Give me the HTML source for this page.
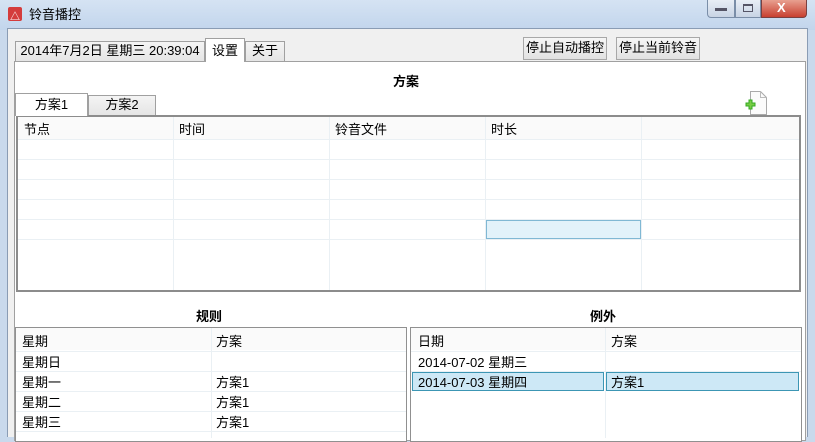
<!DOCTYPE html>
<html><head><meta charset="utf-8"><style>
*{margin:0;padding:0;box-sizing:border-box}
body{width:815px;height:437px;overflow:hidden;position:relative;background:#c9d9ec;font-family:"Liberation Sans","Noto Sans CJK SC",sans-serif;font-size:12px;color:#000}
.a{position:absolute}
.t{position:absolute;white-space:nowrap}
.tab{position:absolute;border:1px solid #a0a0a0;border-bottom:none;background:linear-gradient(#f4f4f4,#e4e4e4);text-align:center;line-height:18px}
.sel{background:#fff}
.btn{position:absolute;border:1px solid #a8a8a8;background:linear-gradient(#f6f6f6,#e2e2e2);text-align:center;line-height:19px;font-size:13px}
.hl{position:absolute;height:1px;background:#eaf0f4}
.vl{position:absolute;width:1px;background:#eaf0f4}
.b{font-weight:bold;font-size:13px}
</style></head><body>
<div class="a" style="left:0;top:0;width:815px;height:30px;background:linear-gradient(#d5e3f3,#c2d5ec)"></div>
<div class="a" style="left:8px;top:7px;width:14px;height:14px;background:#d43c3c;border-radius:2px"></div>
<div class="t" style="left:10px;top:8px;color:#fff;font-size:10px;font-weight:bold">&#9651;</div>
<div class="t" style="left:29px;top:4px;font-size:13px">铃音播控</div>
<div class="a" style="left:707px;top:0;width:28px;height:18px;border:1px solid #7a8ea8;border-top:none;border-radius:0 0 0 4px;background:linear-gradient(#e8eef6,#c8d4e4)"></div>
<div class="a" style="left:715px;top:8px;width:12px;height:3px;background:#556;"></div>
<div class="a" style="left:735px;top:0;width:26px;height:18px;border:1px solid #7a8ea8;border-top:none;background:linear-gradient(#e8eef6,#c8d4e4)"></div>
<div class="a" style="left:743px;top:4px;width:10px;height:8px;border:1px solid #556;border-top-width:2px"></div>
<div class="a" style="left:761px;top:0;width:46px;height:18px;border:1px solid #7a4040;border-top:none;border-radius:0 0 4px 0;background:linear-gradient(#e8a090,#c84030)"></div>
<div class="t" style="left:777px;top:0;color:#fff;font-weight:bold;font-size:13px">X</div>
<div class="a" style="left:7px;top:28px;width:801px;height:409px;background:#f0f0f0;border:1px solid #8a9cb4;border-bottom:none"></div>
<div class="tab" style="left:15px;top:41px;width:190px;height:21px;font-size:13px">2014年7月2日 星期三 20:39:04</div>
<div class="tab sel" style="left:205px;top:38px;width:40px;height:24px;font-size:13px;line-height:24px;z-index:2">设置</div>
<div class="tab" style="left:245px;top:41px;width:40px;height:21px;font-size:13px">关于</div>
<div class="btn" style="left:523px;top:37px;width:84px;height:23px">停止自动播控</div>
<div class="btn" style="left:616px;top:37px;width:84px;height:23px">停止当前铃音</div>
<div class="a" style="left:14px;top:61px;width:792px;height:380px;background:#fff;border:1px solid #a0a0a0"></div>
<div class="t b" style="left:393px;top:71px">方案</div>
<div class="tab sel" style="left:15px;top:93px;width:73px;height:23px;line-height:22px;font-size:13px;z-index:2">方案1</div>
<div class="tab" style="left:88px;top:95px;width:68px;height:21px;font-size:13px">方案2</div>
<svg class="a" style="left:744px;top:90px" width="24" height="26"><path d="M6.5 1.5h10l6 6v17h-16z" fill="#fbfbfb" stroke="#aaa"/><path d="M16.5 1.5v6h6" fill="none" stroke="#bbb"/><path d="M5 10h3v3h3v3h-3v3h-3v-3h-3v-3h3z" fill="#7c4" stroke="#3a2"/></svg>
<div class="a" style="left:16px;top:115px;width:785px;height:177px;border:2px solid #8c8c8c;background:#fff"></div>
<div class="a" style="left:18px;top:117px;width:781px;height:22px;background:#fafafa"></div>
<div class="hl" style="left:18px;top:139px;width:781px"></div>
<div class="hl" style="left:18px;top:159px;width:781px"></div>
<div class="hl" style="left:18px;top:179px;width:781px"></div>
<div class="hl" style="left:18px;top:199px;width:781px"></div>
<div class="hl" style="left:18px;top:219px;width:781px"></div>
<div class="hl" style="left:18px;top:239px;width:781px"></div>
<div class="vl" style="left:173px;top:117px;height:173px"></div>
<div class="vl" style="left:329px;top:117px;height:173px"></div>
<div class="vl" style="left:485px;top:117px;height:173px"></div>
<div class="vl" style="left:641px;top:117px;height:173px"></div>
<div class="t" style="left:24px;top:119px;font-size:13px">节点</div>
<div class="t" style="left:179px;top:119px;font-size:13px">时间</div>
<div class="t" style="left:335px;top:119px;font-size:13px">铃音文件</div>
<div class="t" style="left:491px;top:119px;font-size:13px">时长</div>
<div class="a" style="left:486px;top:220px;width:155px;height:19px;background:#e2f2fa;border:1px solid #80b8d4"></div>
<div class="t b" style="left:196px;top:306px">规则</div>
<div class="t b" style="left:590px;top:306px">例外</div>
<div class="a" style="left:15px;top:327px;width:392px;height:115px;border:1px solid #909090;background:#fff"></div>
<div class="a" style="left:16px;top:328px;width:390px;height:22px;background:#fafafa"></div>
<div class="hl" style="left:16px;top:351px;width:390px"></div>
<div class="hl" style="left:16px;top:371px;width:390px"></div>
<div class="hl" style="left:16px;top:391px;width:390px"></div>
<div class="hl" style="left:16px;top:411px;width:390px"></div>
<div class="hl" style="left:16px;top:431px;width:390px"></div>
<div class="vl" style="left:211px;top:328px;height:110px"></div>
<div class="t" style="left:22px;top:331px;font-size:13px">星期</div>
<div class="t" style="left:216px;top:331px;font-size:13px">方案</div>
<div class="t" style="left:22px;top:352px;font-size:13px">星期日</div>
<div class="t" style="left:22px;top:372px;font-size:13px">星期一</div><div class="t" style="left:216px;top:372px;font-size:13px">方案1</div>
<div class="t" style="left:22px;top:392px;font-size:13px">星期二</div><div class="t" style="left:216px;top:392px;font-size:13px">方案1</div>
<div class="t" style="left:22px;top:412px;font-size:13px">星期三</div><div class="t" style="left:216px;top:412px;font-size:13px">方案1</div>
<div class="a" style="left:410px;top:327px;width:392px;height:115px;border:1px solid #909090;background:#fff"></div>
<div class="a" style="left:411px;top:328px;width:390px;height:22px;background:#fafafa"></div>
<div class="hl" style="left:411px;top:351px;width:390px"></div>
<div class="hl" style="left:411px;top:371px;width:390px"></div>
<div class="vl" style="left:605px;top:328px;height:110px"></div>
<div class="t" style="left:418px;top:331px;font-size:13px">日期</div>
<div class="t" style="left:611px;top:331px;font-size:13px">方案</div>
<div class="t" style="left:418px;top:352px;font-size:13px">2014-07-02 星期三</div>
<div class="a" style="left:412px;top:372px;width:192px;height:19px;background:#cde8f6;border:1px solid #3c96b4"></div>
<div class="a" style="left:606px;top:372px;width:193px;height:19px;background:#cde8f6;border:1px solid #3c96b4"></div>
<div class="t" style="left:418px;top:372px;font-size:13px">2014-07-03 星期四</div>
<div class="t" style="left:611px;top:372px;font-size:13px">方案1</div>
</body></html>
